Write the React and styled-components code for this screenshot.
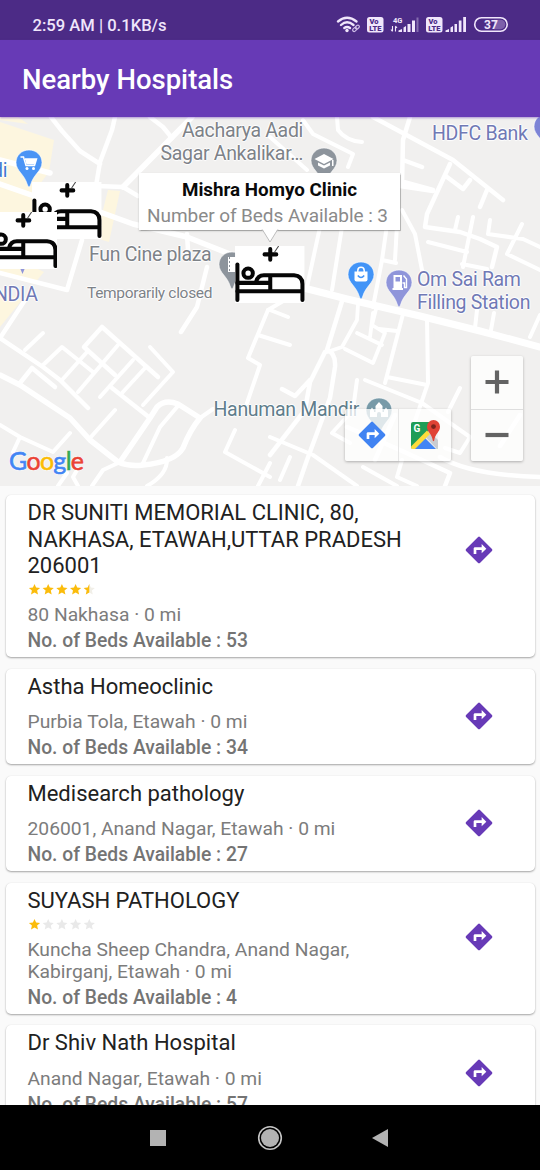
import React from 'react';
import styled, { createGlobalStyle } from 'styled-components';

const GlobalStyle = createGlobalStyle`
  * { box-sizing: border-box; }
  html, body { margin: 0; padding: 0; background: #000; overflow: hidden; }
  body { font-family: Roboto, "Noto Sans", sans-serif; }
  svg { display: block; }
`;

const Screen = styled.div`
  width: 540px;
  height: 1170px;
  display: flex;
  flex-direction: column;
  overflow: hidden;
  background: #fafafa;
`;

const StatusBar = styled.div`
  height: 40px;
  flex: none;
  display: flex;
  align-items: center;
  justify-content: space-between;
  padding: 10px 30px 0 32.5px;
  background: #4c2b86;
  color: #f0e6fb;
`;

const StatusText = styled.span`
  padding-top: 1px;
  font-size: 16.6px;
  font-weight: 500;
  line-height: 20px;
  white-space: pre;
`;

const AppBar = styled.header`
  height: 77px;
  flex: none;
  display: flex;
  align-items: center;
  padding: 2px 22px 0;
  background: #673ab6;
  color: #fff;
  box-shadow: 0 1px 2px rgba(103, 58, 182, 0.5);
  position: relative;
  z-index: 2;
`;

const Title = styled.h1`
  margin: 0;
  font-size: 27.5px;
  font-weight: 500;
  line-height: 32px;
`;

const MapArea = styled.section`
  position: relative;
  flex: none;
  height: 369px;
  overflow: hidden;
  background: #f1f0ef;
`;

const MapLabel = styled.div`
  position: absolute;
  left: ${(p) => p.$x}px;
  top: ${(p) => p.$y}px;
  color: ${(p) => p.$color || '#7d8288'};
  font-size: ${(p) => p.$size || 19.5}px;
  line-height: 23px;
  letter-spacing: -0.32px;
  text-align: ${(p) => p.$align || 'left'};
  white-space: pre;
  text-shadow: 1px 0 1px #fff, -1px 0 1px #fff, 0 1px 1px #fff, 0 -1px 1px #fff;
`;

const Marker = styled.div`
  position: absolute;
  left: ${(p) => p.$x}px;
  top: ${(p) => p.$y}px;
`;

const InfoWindow = styled.div`
  position: absolute;
  left: 139px;
  top: 56px;
  width: 261px;
  height: 57px;
  padding-top: 5px;
  background: #fff;
  box-shadow: 0 0 1px 0.5px rgba(0, 0, 0, 0.2), 0 1px 2px rgba(0, 0, 0, 0.2);
  text-align: center;
  white-space: nowrap;
`;

const InfoTitle = styled.div`
  font-size: 18.8px;
  font-weight: 700;
  line-height: 24px;
  color: #0a0a0a;
`;

const InfoSnippet = styled.div`
  margin: 1px 4px 0 0;
  font-size: 19px;
  line-height: 26px;
  letter-spacing: -0.07px;
  color: #8a8a8a;
`;

const InfoTip = styled.svg`
  position: absolute;
  left: 122px;
  top: 56px;
`;

const ControlGroup = styled.div`
  position: absolute;
  left: ${(p) => p.$x}px;
  top: ${(p) => p.$y}px;
  display: flex;
  flex-direction: ${(p) => (p.$vertical ? 'column' : 'row')};
  border-radius: 2px;
  background: rgba(255, 255, 255, 0.76);
  box-shadow: 0 1px 3px rgba(0, 0, 0, 0.28);
`;

const ControlButton = styled.button`
  width: ${(p) => (p.$vertical ? 52 : 53)}px;
  height: 52.5px;
  padding: 0;
  border: 0;
  border-top: ${(p) => (p.$vertical && p.$divided ? '1px solid #dedede' : '0')};
  border-left: ${(p) => (!p.$vertical && p.$divided ? '1px solid #e6e6e6' : '0')};
  background: transparent;
  display: flex;
  align-items: center;
  justify-content: center;
`;

const GoogleMark = styled.div`
  position: absolute;
  left: 9px;
  top: 328px;
  font-family: Lato, Roboto, sans-serif;
  font-size: 25px;
  line-height: 30px;
  letter-spacing: -0.7px;
  text-shadow: 0 0 2px #fff, 0 0 2px #fff, 0 0 2px #fff;
`;

const Letter = styled.span`
  color: ${(p) => p.$color};
  -webkit-text-stroke: 0.6px ${(p) => p.$color};
`;

const List = styled.main`
  flex: 1;
  min-height: 0;
  overflow: hidden;
  display: flex;
  flex-direction: column;
  gap: 11.7px;
  padding: 9.4px 5.5px 0;
`;

const Card = styled.article`
  flex: none;
  display: flex;
  justify-content: space-between;
  align-items: flex-start;
  padding: 5px 39.5px 5px 22px;
  border-radius: 5px;
  background: #fff;
  box-shadow: 0 1px 2px rgba(0, 0, 0, 0.34), 0 0 1px rgba(0, 0, 0, 0.08);
`;

const CardBody = styled.div`
  width: 395px;
`;

const CardTitle = styled.h2`
  margin: 0;
  font-size: 22px;
  font-weight: 400;
  line-height: 26.4px;
  color: #212121;
`;

const Stars = styled.div`
  display: flex;
  height: 13px;
  margin: 3.6px 0 8px;
`;

const Address = styled.p`
  margin: ${(p) => (p.$rated ? 0 : 10.8)}px 0 0;
  font-size: 19.25px;
  line-height: 22px;
  color: #7c7c7c;
`;

const Beds = styled.p`
  margin: 4px 0 0;
  font-size: 19.3px;
  font-weight: 500;
  line-height: 22px;
  color: #747474;
`;

const GoButton = styled.button`
  margin-top: ${(p) => (p.$rated ? 33.2 : 26.5)}px;
  padding: 0;
  border: 0;
  background: transparent;
`;

const NavBar = styled.nav`
  height: 65px;
  flex: none;
  display: flex;
  align-items: center;
  justify-content: space-between;
  padding: 0 150px 0 149px;
  background: #000;
`;

const DirectionsIcon = ({ size, color, arrow = '#fff' }) => (
  <svg width={size} height={size} viewBox="0 0 24 24">
    <path fill={arrow} d="M7 7h10v9H7z" />
    <path
      fill={color}
      fillRule="evenodd"
      d="M21.71 11.29l-9-9a.996.996 0 0 0-1.41 0l-9 9a.996.996 0 0 0 0 1.41l9 9c.39.39 1.02.39 1.41 0l9-9a.996.996 0 0 0 0-1.41zM14 14.5V12h-4v3H8v-4c0-.55.45-1 1-1h5V7.5l3.5 3.5-3.5 3.5z"
    />
  </svg>
);

const BedIcon = () => (
  <svg width="69.500" height="57" viewBox="0 0 207 170">
    <rect width="207" height="170" fill="#fff" />
    <g fill="none" stroke="#060606" strokeWidth="12" strokeLinecap="round" strokeLinejoin="round">
      <path d="M7 55V161" />
      <circle cx="39" cy="81" r="14" />
      <path d="M7 110H105M105 88V135M7 135H201M63 106C66 94 74 87 86 87H176Q201 89 201 113V161" />
      <path d="M105 9V41M88 25H123" strokeWidth="12" />
    </g>
    <path d="M130 0L118 18" stroke="#444" strokeWidth="3" />
  </svg>
);

const Pin = ({ color, children }) => (
  <svg width="28" height="40" viewBox="0 0 28 40">
    <path
      d="M14 1C6.500 1 1 6.500 1 13.500C1 22 9.500 25 12.500 36Q14 40 15.500 36C18.500 25 27 22 27 13.500C27 6.500 21.500 1 14 1Z"
      fill={color}
      stroke="#fff"
      strokeWidth="0.600"
    />
    {children}
  </svg>
);

const ROADS = [
  ['M51 117L62 131L80 151L100 164M115 117L112 130L100 162L96 186M150 117L163 127L172 138M97 186L123 187L138 196', 4.5],
  ['M192 117L123 187M0 184L37 197M0 160L50 173M100 212L133 224L187 237L240 258L300 287', 5.5],
  ['M187 234L188 250M207 267L197 307L181 332M82 240L67 290L0 273', 4.5],
  ['M25 300L0 338L43 367L60 380L88 408', 4.5],
  ['M25 350L43 333M43 365L62 347L93 372M62 380L87 352M78 392L118 345M100 397L133 360M122 393L145 368M143 405L173 372L150 347', 4],
  ['M158 377L102 327L84 347L115 375M112 388L150 418M20 383L32 368L55 387', 4.5],
  ['M0 375L20 385L70 418L90 440L118 462Q130 467 143 465Q175 462 183 448Q190 430 200 418L178 404Q165 399 157 407L150 418L120 462', 5.5],
  ['M90 438L115 410M143 463L160 427L177 407M200 418L213 409M0 425L20 437L53 452L70 433M20 437L13 452', 4],
  ['M118 463L103 470L92 486M77 470L73 477L78 486M67 473L58 486M167 458Q168 474 147 486M235 430L225 452L270 477M270 463L258 486', 4],
  ['M268 310L248 358L260 365L247 403M258 335L290 345', 4],
  ['M300 287L347 299L420 316L480 331L540 347', 7],
  ['M320 227L307 287L268 310M342 227L332 290M387 225L382 260L373 307M397 225L395 260M382 260L396 263M402 210L415 234L422 270', 4],
  ['M373 117L453 160L503 200M410 117L403 140L402 185M403 160L422 167M400 181L433 190M400 186L433 191', 4.5],
  ['M450 164L427 214L425 227L460 232L480 239L497 247L492 267M447 177L463 189L470 180M487 190L480 207', 4.5],
  ['M490 220L488 234L523 239L540 247M455 230L458 217M473 217L463 267M428 242L467 252M522 224L507 254L540 270M462 264L487 269', 4],
  ['M303 120L313 134L353 154L348 167M337 117L338 130Q346 141 362 142M270 137L307 170', 4],
  ['M343 298L327 350Q336 353 335 367L330 398L307 460L298 486M325 352L310 382L305 410L270 455M282 389L295 396L310 380', 4.5],
  ['M358 304L357 320L342 347L327 352M345 349L373 363L385 333L372 325L376 309M357 333L382 345M370 337L373 313M379 329L397 331', 3.8],
  ['M403 314L385 383M387 377L427 385M427 318L428 383L413 427M365 380L422 403L450 423L470 437L460 453L445 448', 4],
  ['M477 310L475 328M494 313L491 330M540 315L530 337M460 388L448 412M270 310L288 317', 4],
  ['M270 437L313 455L357 486M290 457L280 480M357 380L353 410L332 433L350 443M363 467L397 486M402 460L397 477L417 486', 4],
  ['M347 427L400 450L450 473L445 486M440 457Q470 475 540 477M395 415L375 460M520 415L500 446', 4.5],
];

const MapCanvas = () => (
  <svg width="540" height="369" viewBox="0 117 540 369">
    <path fill="#fdf6df" d="M0 122L54 140L49 172L40 184L36 220L36 268L44 272L34 284L0 275Z" />
    <path fill="#fdf6df" d="M108 190L120 191L109 242L96 238ZM0 290L22 300L0 327ZM0 117H18L28 124L0 120Z" />
    {ROADS.map(([d, w], i) => (
      <path key={i} d={d} fill="none" stroke="#fff" strokeWidth={w} strokeLinecap="round" strokeLinejoin="round" />
    ))}
  </svg>
);

const StatusIcons = () => (
  <svg width="174" height="20" viewBox="336 15 174 20" fill="none">
    <g stroke="#f0e6fb" strokeWidth="2.300" strokeLinecap="round">
      <path d="M338 21.500Q347 14 356.500 21.500M341 25Q347 19.500 353.500 25M344.300 28Q347 26 350 28" />
    </g>
    <circle cx="347" cy="30.500" r="1.700" fill="#f0e6fb" />
    <g stroke="#cdbbe6" strokeWidth="1.200">
      <rect x="352.500" y="27.800" width="4.500" height="3" rx="1.500" transform="rotate(-42 355 29.500)" />
      <rect x="355" y="25.500" width="4.500" height="3" rx="1.500" transform="rotate(-42 357.500 27)" />
    </g>
    {[367, 426].map((x) => (
      <g key={x}>
        <rect x={x} y="17" width="16.500" height="15.500" rx="2.500" fill="#f0e6fb" />
        <g fill="#4c2b86" fontFamily="Roboto, sans-serif" fontWeight="900" textAnchor="middle">
          <text x={x + 7} y="24" fontSize="7.500">Vo</text>
          <text x={x + 8.3} y="31.200" fontSize="7.500">LTE</text>
        </g>
      </g>
    ))}
    <text x="393" y="22.500" fontSize="7.500" fontWeight="700" fontFamily="Roboto, sans-serif" fill="#f0e6fb">4G</text>
    <path d="M392.500 26V31M391 29.500L392.500 31.500M395.500 31.500V26.500M397 28L395.500 26" stroke="#f0e6fb" strokeWidth="1.100" />
    <g fill="#f0e6fb">
      <path d="M398.500 32V30.500L402 29V32ZM403.500 32V27.500L406 26V32ZM407.500 32V24H410.500V32ZM412 32V20.500H415V32Z" />
      <path d="M416.500 32V17.500H418.500V32Z" opacity=".35" />
      <path d="M445.500 32V30.500L449 29V32ZM450.500 32V27.500L453 26V32ZM454.500 32V24H457V32ZM458.800 32V20.500H461.500V32ZM463.200 32V17H466V32Z" />
    </g>
    <rect x="474.700" y="17.700" width="32.500" height="13.500" rx="6.750" stroke="#f0e6fb" strokeWidth="1.600" />
    <path d="M494 19.700H500.500A4.700 4.700 0 0 1 500.500 29.200H494Z" fill="#7d60aa" />
    <text x="491" y="28.700" fontSize="12" fontWeight="700" fontFamily="Roboto, sans-serif" textAnchor="middle" fill="#f0e6fb">37</text>
  </svg>
);

const GoogleMapsIcon = () => (
  <svg width="32" height="32" viewBox="-1 0 32 32">
    <defs>
      <clipPath id="tile"><rect x="1" y="3" width="27" height="27" rx="2" /></clipPath>
    </defs>
    <g clipPath="url(#tile)">
      <rect x="1" y="3" width="27" height="27" fill="#1e9d57" />
      <path d="M1 30L28 3V30Z" fill="#f2f2f2" />
      <path d="M19 12L32 25V31H28L14.500 17Z" fill="#c9ccd0" />
      <path d="M14.500 18.500L27 31H2Z" fill="#4285f4" />
      <path d="M-1 29.500L17 11.500L20 15L3 32Z" fill="#fddc3c" />
    </g>
    <text x="3.500" y="13" fontFamily="Roboto, sans-serif" fontSize="10" fontWeight="700" fill="#fff">G</text>
    <path d="M23.500 1A6.600 6.600 0 0 0 17 7.700C17 13 22 14.500 22.800 21.500Q23.500 23 24.200 21.500C25 14.500 30 13 30 7.700A6.600 6.600 0 0 0 23.500 1Z" fill="#e04335" />
    <circle cx="23.500" cy="7.600" r="2.400" fill="#7b241c" />
  </svg>
);

const STAR = 'M6 .8L7.600 4.500L11.600 4.900L8.600 7.500L9.500 11.500L6 9.400L2.500 11.500L3.400 7.500L.4 4.900L4.400 4.500Z';

const Rating = ({ value }) => (
  <Stars>
    <svg width="69" height="13" viewBox="0 0 69 13">
      {[0, 1, 2, 3, 4].map((i) => {
        const fill = Math.min(1, Math.max(0, value - i));
        return (
          <g key={i} transform={`translate(${0.5 + i * 13.7} 0.100)`}>
            {fill !== 0.5 && <path d={STAR} fill={fill === 1 ? '#fbbc0b' : '#e9e9e9'} />}
            {fill === 0.5 && (
              <>
                <path d={STAR} fill="#f1efe8" />
                <path d="M6 .8L4.400 4.500L.4 4.900L3.400 7.500L2.500 11.500L6 9.400Z" fill="#fbbc0b" />
              </>
            )}
          </g>
        );
      })}
    </svg>
  </Stars>
);

const HOSPITALS = [
  { name: 'DR SUNITI MEMORIAL CLINIC, 80, NAKHASA, ETAWAH,UTTAR PRADESH 206001', rating: 4.5, address: '80 Nakhasa · 0 mi', beds: 53 },
  { name: 'Astha Homeoclinic', address: 'Purbia Tola, Etawah · 0 mi', beds: 34 },
  { name: 'Medisearch pathology', address: '206001, Anand Nagar, Etawah · 0 mi', beds: 27 },
  { name: 'SUYASH PATHOLOGY', rating: 1, address: 'Kuncha Sheep Chandra, Anand Nagar, Kabirganj, Etawah · 0 mi', beds: 4 },
  { name: 'Dr Shiv Nath Hospital', address: 'Anand Nagar, Etawah · 0 mi', beds: 57 },
];

const HospitalCard = ({ name, rating, address, beds }) => (
  <Card>
    <CardBody>
      <CardTitle>{name}</CardTitle>
      {rating && <Rating value={rating} />}
      <Address $rated={!!rating}>{address}</Address>
      <Beds>No. of Beds Available : {beds}</Beds>
    </CardBody>
    <GoButton $rated={!!rating} aria-label="Directions">
      <DirectionsIcon size={32} color="#673ab7" />
    </GoButton>
  </Card>
);

const BUSINESS = '#7079b5';
const GOOGLE = [['G', '#4285f4'], ['o', '#ea4335'], ['o', '#fbbc05'], ['g', '#4285f4'], ['l', '#34a853'], ['e', '#ea4335']];

export default function App() {
  return (
    <Screen>
      <GlobalStyle />
      <StatusBar>
        <StatusText>2:59 AM | 0.1KB/s</StatusText>
        <StatusIcons />
      </StatusBar>
      <AppBar>
        <Title>Nearby Hospitals</Title>
      </AppBar>

      <MapArea>
        <MapCanvas />
        <MapLabel $x={160.5} $y={2} $align="right">{'Aacharya Aadi\nSagar Ankalikar…'}</MapLabel>
        <MapLabel $x={432} $y={5} $color={BUSINESS}>HDFC Bank</MapLabel>
        <MapLabel $x={-8} $y={42} $color="#3f7ad0">di</MapLabel>
        <MapLabel $x={-11} $y={166} $color={BUSINESS}>INDIA</MapLabel>
        <MapLabel $x={89} $y={126}>Fun Cine plaza</MapLabel>
        <MapLabel $x={87} $y={165} $size={15.5}>Temporarily closed</MapLabel>
        <MapLabel $x={417} $y={151} $color={BUSINESS}>{'Om Sai Ram\nFilling Station'}</MapLabel>
        <MapLabel $x={213.5} $y={281} $color="#607d8b">Hanuman Mandir</MapLabel>

        <Marker $x={14.5} $y={32}>
          <Pin color="#4a94f5">
            <path d="M5.500 8H8.500L11 16.500H19.500L21.500 10H10" fill="none" stroke="#fff" strokeWidth="1.500" />
            <path d="M10 10H21.500L19.500 15.500H11.500Z" fill="#fff" />
            <circle cx="12" cy="19.500" r="1.500" fill="#fff" /><circle cx="18.500" cy="19.500" r="1.500" fill="#fff" />
          </Pin>
        </Marker>
        <Marker $x={310} $y={30}>
          <Pin color="#8d949c">
            <path d="M14 7L4.500 12L14 17L23.500 12Z" fill="#fff" />
            <path d="M8 15.500V18.500L14 21.500L20 18.500V15.500L14 18.500ZM22 13H23.500V19H22Z" fill="#fff" />
          </Pin>
        </Marker>
        <Marker $x={347} $y={144}>
          <Pin color="#4294f7">
            <path d="M7.500 10.500H20.500V18.500Q20.500 20.500 18.500 20.500H9.500Q7.500 20.500 7.500 18.500Z" fill="#fff" />
            <path d="M10.800 11V9.500A3.200 3.200 0 0 1 17.200 9.500V11" fill="none" stroke="#fff" strokeWidth="1.500" />
            <path d="M10.800 14.500Q14 18.500 17.200 14.500" fill="none" stroke="#4294f7" strokeWidth="1.500" />
          </Pin>
        </Marker>
        <Marker $x={385} $y={152}>
          <Pin color="#8f95da">
            <path d="M8.500 6H17V19H18V21H7.500V19H8.500Z" fill="#fff" />
            <path d="M10.500 8H15V12.500H10.500Z" fill="#8f95da" />
            <path d="M17.500 14H19.500V18.500H21.500V10L18.500 6.500" fill="none" stroke="#fff" strokeWidth="1.400" />
          </Pin>
        </Marker>
        <Marker $x={218} $y={134}>
          <Pin color="#8d949c">
            <path d="M10 6H28V21H10Z" fill="#fff" />
            <path d="M11.500 6V21" stroke="#8d949c" strokeDasharray="2 2" />
          </Pin>
        </Marker>
        <Marker $x={533} $y={-4}><Pin color="#7d84d6"><path d="M8 8H20V18H8Z" fill="#fff" /></Pin></Marker>
        <Marker $x={365} $y={280}>
          <Pin color="#789aa8">
            <path d="M5 20V13.500L7 10.500L9 13.500V15H10.500V9L14 5L17.500 9V15H19V13.500L21 10.500L23 13.500V20H16V17A2 2 0 0 0 12 17V20Z" fill="#fff" />
          </Pin>
        </Marker>
        <Marker $x={19} $y={150}>
          <svg width="8" height="8" viewBox="0 0 8 8"><path d="M1 1H6L3.500 7Z" fill="#8f95da" /></svg>
        </Marker>

        <Marker $x={32} $y={65}><BedIcon /></Marker>
        <Marker $x={-12.5} $y={95}><BedIcon /></Marker>
        <Marker $x={235} $y={129}><BedIcon /></Marker>

        <InfoWindow>
          <InfoTitle>Mishra Homyo Clinic</InfoTitle>
          <InfoSnippet>Number of Beds Available : 3</InfoSnippet>
          <InfoTip width="18" height="15" viewBox="0 0 18 15">
            <path d="M1 0L9 13L17 0" fill="#fff" stroke="#bdbdbd" strokeWidth="1" />
            <path d="M1.500 0H16.500" stroke="#fff" strokeWidth="2" />
          </InfoTip>
        </InfoWindow>

        <ControlGroup $x={471} $y={239} $vertical>
          <ControlButton $vertical aria-label="Zoom in">
            <svg width="24" height="24" viewBox="0 0 24 24"><path d="M0.500 12H23.500M12 0.500V23.500" stroke="#636363" strokeWidth="4.200" /></svg>
          </ControlButton>
          <ControlButton $vertical $divided aria-label="Zoom out">
            <svg width="24" height="24" viewBox="0 0 24 24"><path d="M0.500 12H23.500" stroke="#636363" strokeWidth="4.200" /></svg>
          </ControlButton>
        </ControlGroup>
        <ControlGroup $x={345} $y={291.5}>
          <ControlButton aria-label="Directions"><DirectionsIcon size={32} color="#4083f2" /></ControlButton>
          <ControlButton $divided aria-label="Open in Maps"><GoogleMapsIcon /></ControlButton>
        </ControlGroup>

        <GoogleMark>
          {GOOGLE.map(([ch, color], i) => <Letter key={i} $color={color}>{ch}</Letter>)}
        </GoogleMark>
      </MapArea>

      <List>
        {HOSPITALS.map((h) => <HospitalCard key={h.name} {...h} />)}
      </List>

      <NavBar>
        <svg width="19" height="18" viewBox="0 0 19 18"><path d="M1 1H17V17H1Z" fill="#b3b3b3" /></svg>
        <svg width="26" height="26" viewBox="0 0 26 26">
          <circle cx="13" cy="13" r="11.300" fill="none" stroke="#c4c4c4" strokeWidth="1.600" />
          <circle cx="13" cy="13" r="9" fill="#b3b3b3" />
        </svg>
        <svg width="18" height="20" viewBox="0 0 18 20"><path d="M16 1V19L0 10Z" fill="#b3b3b3" /></svg>
      </NavBar>
    </Screen>
  );
}
